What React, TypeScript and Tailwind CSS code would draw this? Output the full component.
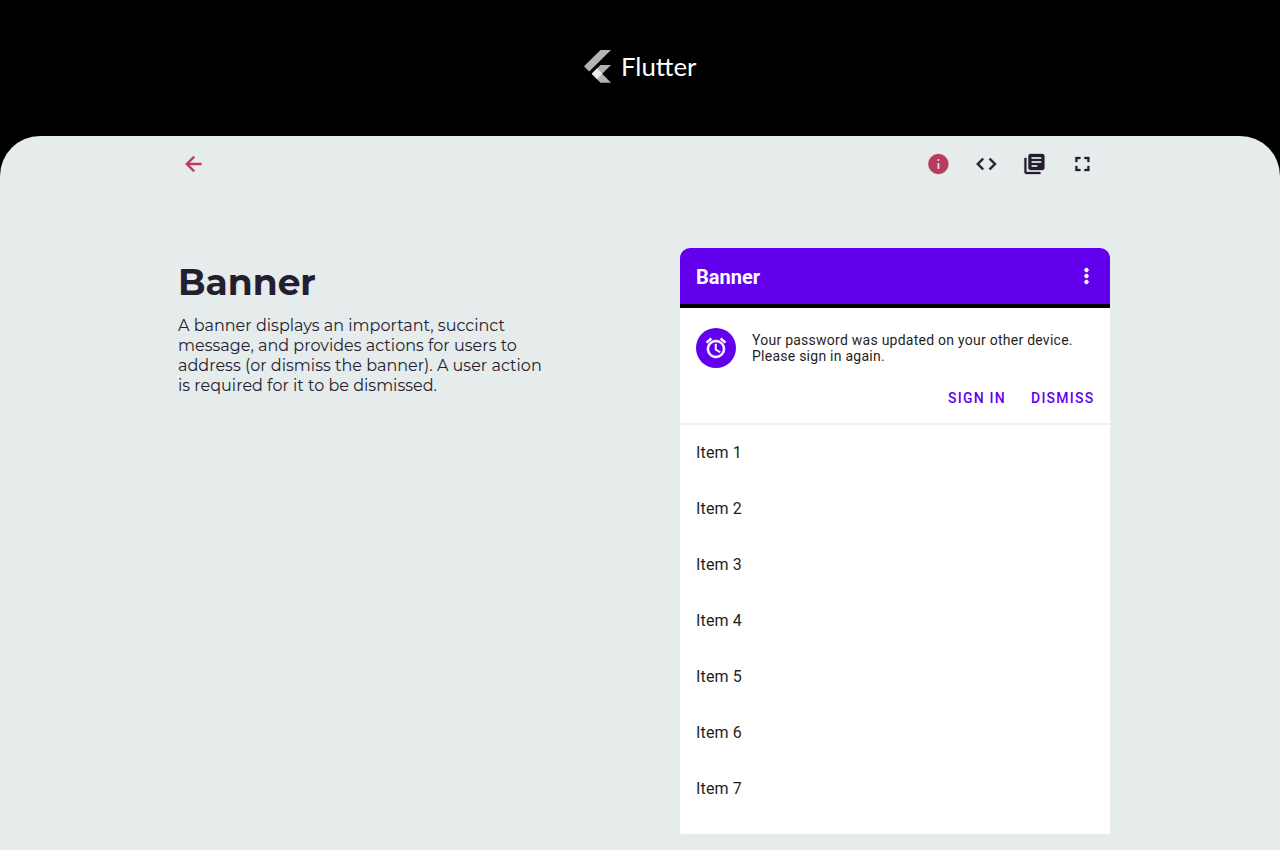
import React from 'react';

const items = [1, 2, 3, 4, 5, 6, 7];

const paths = {
  back: 'M20 11H7.83l5.59-5.59L12 4l-8 8 8 8 1.41-1.41L7.83 13H20v-2z',
  info: 'M12 2C6.48 2 2 6.48 2 12s4.48 10 10 10 10-4.48 10-10S17.52 2 12 2zm1 15h-2v-6h2v6zm0-8h-2V7h2v2z',
  code: 'M9.4 16.6L4.8 12l4.6-4.6L8 6l-6 6 6 6 1.4-1.4zm5.2 0l4.6-4.6-4.6-4.6L16 6l6 6-6 6-1.4-1.4z',
  library:
    'M4 6H2v14c0 1.1.9 2 2 2h14v-2H4V6zm16-4H8c-1.1 0-2 .9-2 2v12c0 1.1.9 2 2 2h12c1.1 0 2-.9 2-2V4c0-1.1-.9-2-2-2zm-1 9H9V9h10v2zm-4 4H9v-2h6v2zm4-8H9V5h10v2z',
  fullscreen: 'M7 14H5v5h5v-2H7v-3zm-2-4h2V7h3V5H5v5zm12 7h-3v2h5v-5h-2v3zM14 5v2h3v3h2V5h-5z',
  alarm:
    'M22 5.72l-4.6-3.86-1.29 1.53 4.6 3.86L22 5.72zM7.88 3.39L6.6 1.86 2 5.71l1.29 1.53 4.59-3.85zM12.5 8H11v6l4.75 2.85.75-1.23-4-2.37V8zM12 4c-4.97 0-9 4.03-9 9s4.02 9 9 9a9 9 0 0 0 0-18zm0 16c-3.87 0-7-3.13-7-7s3.13-7 7-7 7 3.13 7 7-3.13 7-7 7z',
  more: 'M12 8c1.1 0 2-.9 2-2s-.9-2-2-2-2 .9-2 2 .9 2 2 2zm0 2c-1.1 0-2 .9-2 2s.9 2 2 2 2-.9 2-2-.9-2-2-2zm0 6c-1.1 0-2 .9-2 2s.9 2 2 2 2-.9 2-2-.9-2-2-2z',
};

function Icon({ name, shift = 0, className = '' }: { name: keyof typeof paths; shift?: number; className?: string }) {
  return (
    <svg viewBox={`${-shift} 0 24 24`} fill="currentColor" stroke="currentColor" className={`block size-6 shrink-0 ${className}`}>
      <path d={paths[name]} />
    </svg>
  );
}

function FlutterMark() {
  return (
    <svg width="27" height="33" viewBox="0 0 27 33" className="block shrink-0">
      <path d="M16.5 0H27L5.2 21.5 0 16.3z" fill="#b3b3b3" />
      <path d="M16.5 15H27L18.2 23.8 27 32.7H16.5L7.7 23.8z" fill="#b3b3b3" />
      <path d="M12.9 18.6l5.3 5.2-5.3 5.2-5.2-5.2z" fill="#ebebeb" />
    </svg>
  );
}

export default function App() {
  return (
    <div className="flex h-[850px] w-[1280px] flex-col overflow-hidden bg-black">
      <header className="flex h-[136px] shrink-0 items-start pt-[50px] pl-[584px]">
        <FlutterMark />
        <span className="ml-[10px] font-['Lato',sans-serif] text-[25.8px] leading-[32px] text-white">Flutter</span>
      </header>
      <main className="min-h-0 flex-1 rounded-t-[40px] bg-[#e6ebeb] pr-[170px] pl-[178px] text-[#241e30]">
        <nav className="flex h-[55px] items-center justify-between pr-[16px] pl-[3px]">
          <Icon name="back" shift={0.4} className="stroke-[0.5] text-[#b93c5d]" />
          <div className="flex gap-6">
            <Icon name="info" shift={0.4} className="stroke-[0.3] text-[#b93c5d]" />
            <Icon name="code" shift={0.4} className="stroke-[0.5]" />
            <Icon name="library" shift={0.4} className="stroke-[0.3]" />
            <Icon name="fullscreen" shift={0.4} className="stroke-[0.3]" />
          </div>
        </nav>
        <div className="flex items-start justify-between pt-[57px]">
          <section className="w-[400px] pt-[10px] font-['Montserrat',sans-serif]">
            <h1 className="text-[36px] leading-[48px] font-bold">Banner</h1>
            <p className="mt-[10px] text-[16px] leading-5 tracking-[0.01px] whitespace-nowrap">
              <span className="block">A banner displays an important, succinct</span>
              <span className="block">message, and provides actions for users to</span>
              <span className="block">address (or dismiss the banner). A user action</span>
              <span className="block">is required for it to be dismissed.</span>
            </p>
          </section>
          <section className="h-[586px] w-[430px] overflow-hidden rounded-t-[10px] rounded-b-[2px] bg-white font-['Roboto',sans-serif] text-[#1f1f1f]">
            <div className="flex h-[60px] items-center justify-between border-b-4 border-black bg-[#6200ee] pr-3 pl-4 text-white">
              <h2 className="pt-[2px] text-[20px] font-bold">Banner</h2>
              <Icon name="more" shift={0.5} className="stroke-[0.5]" />
            </div>
            <div className="h-[117px] border-b-2 border-[#efefef] px-4 pt-5">
              <div className="flex items-start gap-4">
                <div className="flex size-10 shrink-0 items-center justify-center rounded-full bg-[#6200ee] text-white">
                  <Icon name="alarm" className="stroke-[0.5]" />
                </div>
                <p className="pt-1 text-[14px] leading-4 tracking-[0.25px] whitespace-nowrap">
                  Your password was updated on your other device.
                  <br />
                  Please sign in again.
                </p>
              </div>
              <div className="mt-[22px] flex justify-end gap-[25px] text-[14px] leading-4 font-medium tracking-[1.25px] text-[#6200ee]">
                <button>SIGN IN</button>
                <button className="-mr-[0.5px]">DISMISS</button>
              </div>
            </div>
            <ul>
              {items.map((n) => (
                <li key={n} className="flex h-14 items-center pl-4 text-[16px] tracking-[0.15px]">Item {n}</li>
              ))}
            </ul>
          </section>
        </div>
      </main>
    </div>
  );
}
